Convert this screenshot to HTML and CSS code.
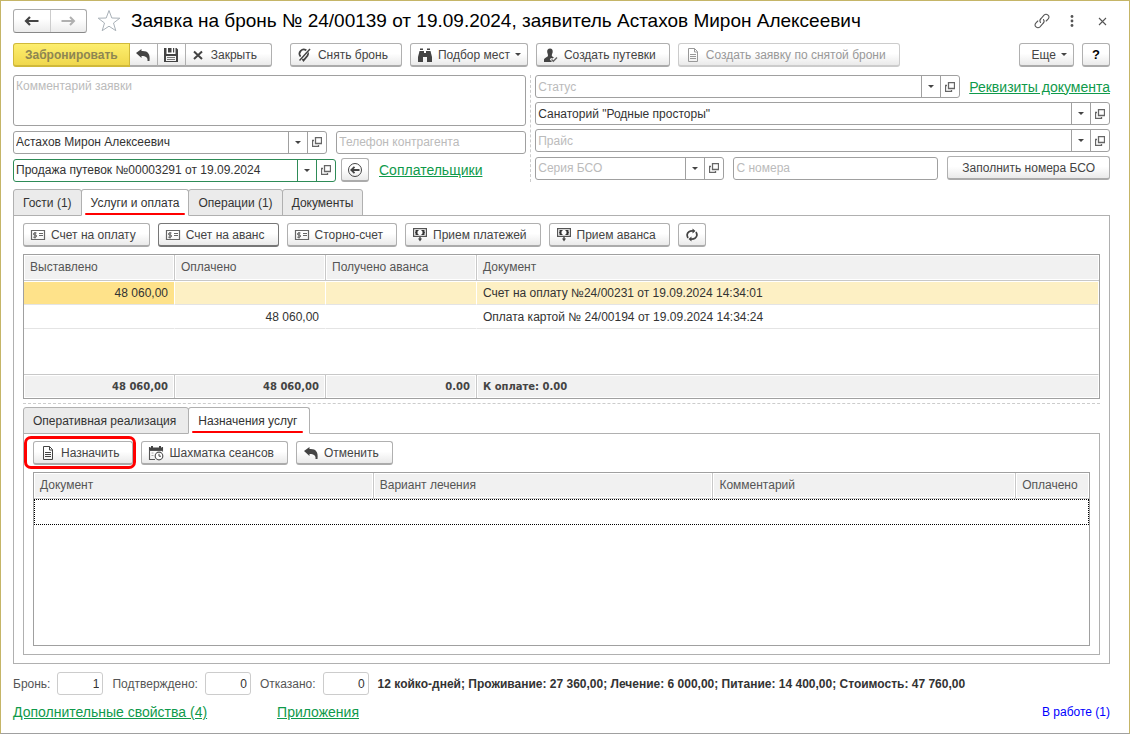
FILE: index.html
```html
<!DOCTYPE html>
<html lang="ru">
<head>
<meta charset="utf-8">
<title>Заявка на бронь № 24/00139</title>
<link rel="stylesheet" href="styles.css">
</head>
<body>
<svg class="sprite" aria-hidden="true">
  <symbol id="i-open" viewBox="0 0 10 10"><path d="M3.500 .5h6v6h-6z M2 3.500H.5v6h6V8" fill="none" stroke="#666" stroke-width="1.300"/></symbol>
  <symbol id="i-undo" viewBox="0 0 16 16"><path d="M1 6L6.500 2V4C12.500 3.500 15.500 6.500 14.500 14H12.500C13 10.500 11 9 6.500 9V11Z" fill="#444"/></symbol>
  <symbol id="i-doc" viewBox="0 0 16 16"><path d="M3.500 1.500h6l3 3v10h-9z M9.500 1.500v3.500h3 M5 7.500h6 M5 9.500h6 M5 11.500h6" fill="none" stroke="currentColor" stroke-width="1"/></symbol>
  <symbol id="i-bill" viewBox="0 0 16 16"><path d="M1.500 3.500h13v9h-13z M9 6.500h4 M9 8.500h4" fill="none" stroke="#666" stroke-width="1.200"/><path d="M6.500 6H4.500q-1 0-1 1t1 1H5.500q1 0 1 1t-1 1.200H3.300M5 5v6.500" fill="none" stroke="#555" stroke-width="1"/></symbol>
  <symbol id="i-cash" viewBox="0 0 16 16"><path d="M1.600 1.600h12.800v7.800H1.600z" fill="none" stroke="#555" stroke-width="1.200"/><path d="M3.500 3H7L5.500 4.500v2L7 8H3.500V6.500L3 5.500l.5-1z M12.500 3H9l1.500 1.500v2L9 8h3.500V6.500l.5-1-.5-1z" fill="#333"/><path d="M8 10v3" stroke="#444" stroke-width="1.400"/><path d="M6 11.500h4L8 14.500z" fill="#444"/></symbol>
</svg>
<main class="window">
  <header class="titlebar">
    <div class="nav">
      <button class="nav-btn" aria-label="Назад"><svg width="16" height="12" viewBox="0 0 16 12"><path d="M2 6h12.500M6 2L2 6l4 4" fill="none" stroke="#444" stroke-width="2.200"/></svg></button>
      <button class="nav-btn" aria-label="Вперед"><svg width="16" height="12" viewBox="0 0 16 12"><path d="M1.500 6H14M10 2l4 4-4 4" fill="none" stroke="#b0b0b0" stroke-width="2"/></svg></button>
    </div>
    <button class="bare star" aria-label="В избранное"><svg width="24" height="24" viewBox="0 0 24 24"><path d="M12 1.500l2.800 7.500 8 .2-6.300 4.800 2.300 7.700-6.800-4.500-6.800 4.500 2.300-7.700L1.200 9.200l8-.2z" fill="none" stroke="#a9b1b8" stroke-width="1"/></svg></button>
    <h1 class="title">Заявка на бронь № 24/00139 от 19.09.2024, заявитель Астахов Мирон Алексеевич</h1>
    <div class="window-tools">
      <button class="bare" aria-label="Ссылка"><svg width="18" height="18" viewBox="0 0 18 18"><g fill="none" stroke="#555" stroke-width="1.100" stroke-linecap="round"><path d="M7.500 10.500Q6 8.500 8 6.500L11 3.200Q13 1.400 15 3.200T15 7.200L13.200 9"/><path d="M10.500 7.500Q12 9.500 10 11.500L7 14.800Q5 16.600 3 14.800T3 10.800L4.800 9"/></g></svg></button>
      <button class="bare" aria-label="Меню"><svg width="4" height="14" viewBox="0 0 4 14"><g fill="#555"><circle cx="2" cy="2.500" r="1.400"/><circle cx="2" cy="7" r="1.400"/><circle cx="2" cy="11.500" r="1.400"/></g></svg></button>
      <button class="bare" aria-label="Закрыть окно"><svg width="9" height="9" viewBox="0 0 9 9"><path d="M1 1l7 7M8 1L1 8" stroke="#555" stroke-width="1.100"/></svg></button>
    </div>
  </header>

  <div class="toolbar commands">
    <div class="group">
      <button class="btn primary">Забронировать</button>
      <button class="btn square" aria-label="Провести"><svg class="ic"><use href="#i-undo"/></svg></button>
      <button class="btn square" aria-label="Записать"><svg class="ic" viewBox="0 0 16 16"><path d="M1 1h2.500v6h9V1H13.500L15 2.500V15H1z" fill="#444"/><path d="M5 1h3.500v4.500H5zM10 1h1.200v4.500H10z" fill="#444"/><path d="M3 9h10v5H3z" fill="#f4f4f4"/><path d="M4 10.500h8M4 12.500h8" stroke="#777"/></svg></button>
      <button class="btn close"><svg class="ic" viewBox="0 0 16 16"><path d="M4 4.500l8 7.500M12 4.500L4 12" stroke="#444" stroke-width="2"/></svg>Закрыть</button>
    </div>
    <button class="btn"><svg class="ic" viewBox="0 0 16 16"><path d="M6.500 13.500L3.400 9.300A4.200 4.200 0 1 1 10.600 8.500z" fill="none" stroke="#444" stroke-width="1.800"/><path d="M3 12.500L12.500 2" stroke="#fff" stroke-width="3"/><path d="M2.500 13.500L13 2" stroke="#444" stroke-width="1.500"/></svg>Снять бронь</button>
    <button class="btn drop"><svg class="ic" viewBox="0 0 16 16"><path d="M3 1.500h3v1.500H3zM10 1.500h3v1.500h-3zM2.500 4h4.500v2h2v-2h4.500l1.500 6v5h-5v-5h-4v5H1v-5z" fill="#444"/></svg>Подбор мест<i class="caret"></i></button>
    <button class="btn"><svg class="ic" viewBox="0 0 16 16"><path d="M7 1.500c2 0 2.900 1.300 2.700 3.500C9.500 6.600 8.800 7.200 8.800 8.500c0 1 1 1.300 2.200 1.800L9.500 11.500 8 11l-1.200 1.500L9 15H1v-2.500c0-1.500 4-2.300 4-4C5 7.200 4.400 6.600 4.200 5 4 2.800 5 1.500 7 1.500z" fill="#444"/><path d="M8.500 12.500l1.800 1.700L14 10.500" fill="none" stroke="#666" stroke-width="1.400"/></svg>Создать путевки</button>
    <button class="btn" disabled><svg class="ic"><use href="#i-doc"/></svg>Создать заявку по снятой брони</button>
    <button class="btn drop more">Еще<i class="caret"></i></button>
    <button class="btn square help">?</button>
  </div>

  <form class="form">
    <div class="col left">
      <textarea class="field comment" aria-label="Комментарий заявки" placeholder="Комментарий заявки"></textarea>
      <div class="row">
        <div class="field combo client"><input aria-label="Контрагент" value="Астахов Мирон Алексеевич"><button type="button" aria-label="Выбрать"><i class="caret"></i></button><button type="button" aria-label="Открыть"><svg width="10" height="10"><use href="#i-open"/></svg></button></div>
        <input class="field phone" aria-label="Телефон контрагента" placeholder="Телефон контрагента">
      </div>
      <div class="row">
        <div class="field combo sale"><input aria-label="Продажа" value="Продажа путевок №00003291 от 19.09.2024"><button type="button" aria-label="Выбрать"><i class="caret"></i></button><button type="button" aria-label="Открыть"><svg width="10" height="10"><use href="#i-open"/></svg></button></div>
        <button type="button" class="btn square" aria-label="Заполнить"><svg class="ic" viewBox="0 0 16 16"><circle cx="8" cy="8" r="6.500" fill="none" stroke="#444"/><path d="M12.500 8H4.500M7.500 4.800L4.300 8l3.200 3.200" fill="none" stroke="#444" stroke-width="1.800"/></svg></button>
        <a class="link" href="#">Соплательщики</a>
      </div>
    </div>
    <div class="col right">
      <div class="row status-row">
        <div class="field combo"><input aria-label="Статус" placeholder="Статус"><button type="button" aria-label="Выбрать"><i class="caret"></i></button><button type="button" aria-label="Открыть"><svg width="10" height="10"><use href="#i-open"/></svg></button></div>
        <a class="link" href="#">Реквизиты документа</a>
      </div>
      <div class="field combo"><input aria-label="Санаторий" value="Санаторий &quot;Родные просторы&quot;"><button type="button" aria-label="Выбрать"><i class="caret"></i></button><button type="button" aria-label="Открыть"><svg width="10" height="10"><use href="#i-open"/></svg></button></div>
      <div class="field combo"><input aria-label="Прайс" placeholder="Прайс"><button type="button" aria-label="Выбрать"><i class="caret"></i></button><button type="button" aria-label="Открыть"><svg width="10" height="10"><use href="#i-open"/></svg></button></div>
      <div class="row series-row">
        <div class="field combo series"><input aria-label="Серия БСО" placeholder="Серия БСО"><button type="button" aria-label="Выбрать"><i class="caret"></i></button><button type="button" aria-label="Открыть"><svg width="10" height="10"><use href="#i-open"/></svg></button></div>
        <input class="field number" aria-label="С номера" placeholder="С номера">
        <button type="button" class="btn text">Заполнить номера БСО</button>
      </div>
    </div>
  </form>

  <div class="tabs" role="tablist">
    <button class="tab" role="tab">Гости (1)</button>
    <button class="tab active" role="tab" aria-selected="true"><span class="marked">Услуги и оплата</span></button>
    <button class="tab" role="tab">Операции (1)</button>
    <button class="tab" role="tab">Документы</button>
  </div>
  <section class="panel outer">
    <div class="toolbar">
      <button class="btn"><svg class="ic"><use href="#i-bill"/></svg>Счет на оплату</button>
      <button class="btn focused"><svg class="ic"><use href="#i-bill"/></svg>Счет на аванс</button>
      <button class="btn"><svg class="ic"><use href="#i-bill"/></svg>Сторно-счет</button>
      <button class="btn"><svg class="ic"><use href="#i-cash"/></svg>Прием платежей</button>
      <button class="btn"><svg class="ic"><use href="#i-cash"/></svg>Прием аванса</button>
      <button class="btn square" aria-label="Обновить"><svg class="ic" viewBox="0 0 16 16"><g fill="none" stroke="#444" stroke-width="1.700"><path d="M4 11Q1.800 7 5 4.800q1.500-1 4-.8"/><path d="M12 5Q14.200 9 11 11.200q-1.500 1-4 .8"/></g><path d="M8.500 1.500l3 2.500-3 2.500zM7.500 9.500L4.500 12l3 2.500z" fill="#444"/></svg></button>
    </div>
    <div class="grid-box">
      <table class="grid payments">
        <colgroup><col class="c-sum"><col class="c-sum"><col class="c-sum"><col></colgroup>
        <thead><tr><th>Выставлено</th><th>Оплачено</th><th>Получено аванса</th><th>Документ</th></tr></thead>
        <tbody>
          <tr class="selected"><td class="num current">48 060,00</td><td></td><td></td><td>Счет на оплату №24/00231 от 19.09.2024 14:34:01</td></tr>
          <tr><td></td><td class="num">48 060,00</td><td></td><td>Оплата картой № 24/00194 от 19.09.2024 14:34:24</td></tr>
          <tr class="filler"><td colspan="4"></td></tr>
        </tbody>
        <tfoot><tr><td class="num">48 060,00</td><td class="num">48 060,00</td><td class="num">0.00</td><td>К оплате: 0.00</td></tr></tfoot>
      </table>
    </div>
    <div class="splitter"></div>
    <div class="tabs" role="tablist">
      <button class="tab" role="tab">Оперативная реализация</button>
      <button class="tab active" role="tab" aria-selected="true"><span class="marked">Назначения услуг</span></button>
    </div>
    <section class="panel inner">
      <div class="toolbar">
        <div class="callout"><button class="btn"><svg class="ic"><use href="#i-doc"/></svg>Назначить</button></div>
        <button class="btn"><svg class="ic" viewBox="0 0 16 16"><path d="M1.500 2v12.500H7M14.500 2v4.500M1 5.500h14" fill="none" stroke="#555" stroke-width="1.100"/><path d="M1 2.500h2V1h2v1.500h6V1h2v1.500h2v2.500H1z" fill="#444"/><circle cx="11" cy="11" r="3.800" fill="#fff" stroke="#555" stroke-width="1.200"/><path d="M11 8.800V11.200h2" fill="none" stroke="#444"/><path d="M3.500 8h2M3.500 10.500h2" stroke="#aaa"/></svg>Шахматка сеансов</button>
        <button class="btn"><svg class="ic"><use href="#i-undo"/></svg>Отменить</button>
      </div>
      <div class="grid-box grow">
        <table class="grid services">
          <colgroup><col class="c-doc"><col class="c-doc"><col class="c-note"><col class="c-paid"></colgroup>
          <thead><tr><th>Документ</th><th>Вариант лечения</th><th>Комментарий</th><th>Оплачено</th></tr></thead>
          <tbody><tr><td class="cursor" colspan="4"></td></tr></tbody>
        </table>
      </div>
    </section>
  </section>

  <footer class="footer">
    <div class="totals">
      <label>Бронь:<input class="field count" value="1"></label>
      <label>Подтверждено:<input class="field count" value="0"></label>
      <label>Отказано:<input class="field count" value="0"></label>
      <strong>12 койко-дней; Проживание: 27 360,00; Лечение: 6 000,00; Питание: 14 400,00; Стоимость: 47 760,00</strong>
    </div>
    <div class="links">
      <a class="link" href="#">Дополнительные свойства (4)</a>
      <a class="link" href="#">Приложения</a>
      <a class="state" href="#">В работе (1)</a>
    </div>
  </footer>
</main>
</body>
</html>
```

FILE: styles.css
```css
* { box-sizing: border-box; }

body {
  margin: 0;
  background: #fff;
}

body, button, input, textarea {
  font-family: "Liberation Sans", Arial, sans-serif;
  font-size: 12px;
  line-height: 14px;
  color: #333;
}

.sprite { position: absolute; width: 0; height: 0; }

.window {
  min-height: 100vh;
  display: flex;
  flex-direction: column;
  padding: 8px 19px 13px 12px;
  border: 1px solid #c5b567;
  border-bottom-color: #a0a0a0;
}

/* Title bar */
.titlebar {
  display: flex;
  align-items: center;
  height: 24px;
}
.nav {
  display: flex;
  width: 74px;
  height: 24px;
  border: 1px solid #aaa;
  border-bottom-color: #888;
  border-radius: 3px;
  background: linear-gradient(#fff 40%, #ebebeb);
}
.nav-btn {
  flex: 1;
  display: grid;
  place-items: center;
  padding: 0;
  border: 0;
  background: none;
}
.nav-btn + .nav-btn { border-left: 1px solid #ccc; }
.bare {
  display: grid;
  place-items: center;
  padding: 0;
  border: 0;
  background: none;
}
.star { margin: 0 10px; }
.title {
  margin: 0;
  font-size: 19px;
  line-height: 24px;
  font-weight: 400;
  color: #000;
  white-space: nowrap;
}
.window-tools {
  display: flex;
  align-items: center;
  gap: 24px;
  margin-left: auto;
  padding-right: 3px;
}
.window-tools .bare:first-child { margin-right: -5px; }

/* Buttons */
.toolbar {
  display: flex;
  align-items: center;
  gap: 8px;
}
.btn {
  display: flex;
  align-items: center;
  justify-content: center;
  gap: 5px;
  height: 24px;
  padding: 0 13px 0 6px;
  border: 1px solid #b0b0b0;
  border-bottom: 2px solid #ababab;
  border-radius: 3px;
  background: linear-gradient(#fff 45%, #eaeaea);
  color: #444;
  white-space: nowrap;
}
.btn:disabled {
  border-color: #ccc;
  color: #999;
}
.btn.text { padding: 0 14px; }
.btn.square {
  width: 28px;
  padding: 0;
}
.btn.focused { border-color: #777; }
.btn.drop { padding-right: 6px; }
.btn.more {
  margin-left: auto;
  padding-left: 12px;
}
.help { color: #000; font-weight: 700; font-size: 13px; }
.ic {
  width: 16px;
  height: 16px;
  flex: none;
}
.caret {
  width: 0;
  border: 3px solid transparent;
  border-top-color: #444;
  border-bottom: 0;
}
.commands { margin-top: 10px; }
.group { display: flex; margin-right: 10px; }
.group .btn { border-radius: 0; border-left-width: 0; }
.group .btn:first-child { border-radius: 3px 0 0 3px; border-left-width: 1px; }
.group .btn:last-child { border-radius: 0 3px 3px 0; }
.group .close { padding: 0 14px 0 4px; }
.group .primary {
  padding: 0 11px;
  border-color: #d0b93a;
  background: linear-gradient(#fdee6e, #f0d84e);
  color: #8d8652;
  font-weight: 700;
}

/* Fields */
.form {
  display: flex;
  margin-top: 8px;
}
.col {
  display: flex;
  flex-direction: column;
  gap: 4px;
  min-width: 0;
}
.left {
  flex: 517;
  padding-right: 4px;
  border-right: 1px dashed #ccc;
}
.right {
  flex: 579;
  padding-left: 4px;
}
.row {
  display: flex;
  align-items: center;
  gap: 9px;
}
.field {
  height: 23px;
  min-width: 0;
  padding: 0 2px;
  border: 1px solid #a0a0a0;
  border-radius: 3px;
  background: #fff;
}
.field::placeholder, .combo input::placeholder { color: #bbb; opacity: 1; }
.comment {
  width: 100%;
  height: 51px;
  padding: 3px 2px;
  resize: none;
  display: block;
}
.combo {
  display: flex;
  padding: 0;
}
.combo input {
  flex: 1;
  min-width: 0;
  padding: 0 2px;
  border: 0;
  background: none;
}
.combo button {
  display: grid;
  place-items: center;
  width: 19px;
  padding: 0;
  border: 0;
  border-left: 1px solid #a0a0a0;
  background: none;
}
.left .row { height: 24px; }
.client { flex: 1 1 314px; }
.phone { flex: 0 1 190px; }
.sale { flex: 0 1 323px; border-color: #2e8b57; }
.sale button { border-color: #2e8b57; }
.left .row:last-child { gap: 5px; }
.left .row:last-child .link { margin-left: 5px; }
.status-row .combo { flex: 1; }
.series { flex: 191; }
.number { flex: 203; }
.series-row { height: 24px; }
.link {
  color: #0f9a4b;
  font-size: 14px;
  line-height: 16px;
  text-decoration: underline;
  white-space: nowrap;
}

/* Tabs */
.tabs { display: flex; }
.window > .tabs { margin-top: 7px; }
.tab {
  height: 27px;
  margin-left: -1px;
  padding: 0 9px;
  border: 1px solid #b0b0b0;
  border-radius: 3px 3px 0 0;
  background: #ebebeb;
}
.panel .tab { padding-right: 12px; }
.tab:first-child { margin-left: 0; }
.tab.active {
  position: relative;
  border-bottom-color: #fff;
  background: #fff;
}
.marked { position: relative; }
.marked::after {
  content: "";
  position: absolute;
  left: -6px;
  right: -6px;
  bottom: -5px;
  height: 2px;
  border-radius: 1px;
  background: #f00;
}
.panel {
  display: flex;
  flex-direction: column;
  flex: 1;
  margin-top: -1px;
  padding: 7px 9px 8px;
  border: 1px solid #b0b0b0;
}
.callout { position: relative; }
.callout::after {
  content: "";
  position: absolute;
  inset: -5px -3px -4px -9px;
  border: 3px solid #f00;
  border-radius: 7px;
  pointer-events: none;
}

/* Tables */
.grid-box {
  margin-top: 7px;
  border: 1px solid #a0a0a0;
}
.grow { flex: 1; }
.grid {
  width: 100%;
  table-layout: fixed;
  border-collapse: separate;
  border-spacing: 0;
}
.grid th, .grid td {
  height: 24px;
  padding: 0 6px;
  border-right: 1px solid transparent;
  border-bottom: 1px solid #e4e4e4;
  text-align: left;
  white-space: nowrap;
}
.grid th {
  height: 26px;
  padding-bottom: 1px;
  border-color: #c8c8c8;
  background: #f1f1f1;
  box-shadow: inset 0 0 0 1px #fff;
  color: #555;
  font-weight: 400;
}
.grid th:last-child, .grid tfoot td:last-child { border-right: 0; }
.grid .num { text-align: right; }
.selected td { background: #fdf0c4; border-right-color: #fff; box-shadow: inset 0 1px #fff; }
.selected .current { background: #fee28a; }
.grid .filler td { height: 46px; border-bottom-color: #c8c8c8; }
.grid tfoot td {
  height: 23px;
  border-right-color: #c8c8c8;
  border-bottom: 0;
  background: #f1f1f1;
  box-shadow: inset 0 0 0 1px #fff;
  font: 700 10px/14px "DejaVu Sans", sans-serif;
  color: #444;
}
.c-sum { width: 151px; }
.c-doc { width: 32.2%; }
.c-note { width: 28.7%; }
.grid .cursor {
  height: 26px;
  border: 1px dotted #000;
}
.splitter {
  margin: 4px 0 3px;
  border-top: 1px dashed #ccc;
}

/* Footer */
.totals {
  display: flex;
  align-items: center;
  gap: 9px;
  margin-top: 8px;
}
.totals label {
  display: flex;
  align-items: center;
  gap: 7px;
  color: #555;
}
.count {
  width: 46px;
  padding: 0 3px;
  border-color: #ccc;
  text-align: right;
}
.links {
  display: flex;
  align-items: center;
  gap: 70px;
  margin-top: 9px;
}
.state {
  margin-left: auto;
  color: #00f;
  text-decoration: none;
}
```
